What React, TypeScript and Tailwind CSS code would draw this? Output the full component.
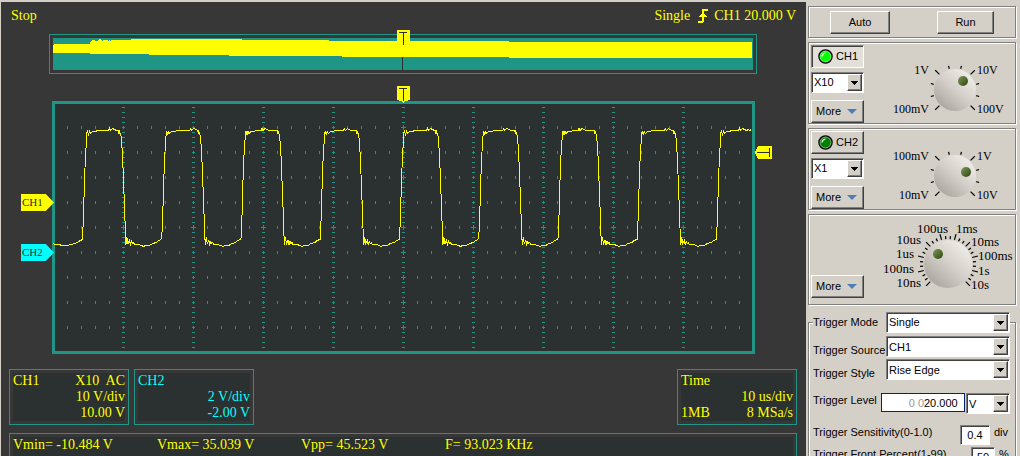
import type { ReactNode } from 'react'

const FIRST_EDGE = 82
const PERIOD = 79.25

// where the ripple on the flat top starts, one entry per pulse
const RIPPLES = [26, 28, 20, 23, 27, 24, 20, 27, 22]

function pulse(ripple: number): [number, number][] {
  return [
    [0, 238], [1, 215], [2, 180], [3, 155], [4, 140], [4.5, 132], [5, 131], [6, 134], [7, 131],
    [8, 133], [10, 131], [13, 131], [15, 130], [ripple, 130], [ripple + 1, 128], [ripple + 2, 130],
    [ripple + 4, 128], [ripple + 6, 129], [ripple + 8, 130], [36, 130], [36.5, 133], [37, 131],
    [38.5, 135], [39, 140], [40, 155], [41, 180], [42, 206], [43, 235], [43.5, 244], [44.5, 237],
    [45.5, 243], [47, 240], [48, 244], [49, 241], [50, 243], [51, 242], [52, 244], [56, 244],
    [59, 245], [61, 246], [63, 245], [67, 245], [70, 243], [74, 242], [76, 240], [79, 239],
  ]
}

function wavePoints() {
  const points: [number, number][] = [
    [53, 243], [54, 244], [59, 244], [61, 245], [67, 245], [70, 244], [75, 243], [78, 241], [82, 239],
  ]
  RIPPLES.forEach((ripple, i) => {
    pulse(ripple).forEach(([dx, y]) => points.push([FIRST_EDGE + i * PERIOD + dx, y]))
  })
  const visible = points.filter(([x]) => x <= 747)
  visible.push([748, 129], [749, 130], [751, 129])
  return visible.map(([x, y]) => `${x + 0.5},${y + 0.5}`).join(' ')
}

function gridPath() {
  let d = ''
  for (let y = 127; y <= 327; y += 25) {
    for (let x = 67; x <= 739; x += 14) {
      const major = (x - 53) % 70 === 0
      const big = major && (y === 227 || x === 403)
      d += big ? `M${x} ${y - 2}h1v5h-1z` : `M${x} ${y - 1}h1v3h-1z`
    }
  }
  for (let x = 123; x <= 683; x += 70) {
    for (let y = 107; y <= 347; y += 5) {
      const big = y === 227 || (x === 403 && (y - 127) % 25 === 0)
      d += big ? `M${x - 2} ${y}h5v1h-5z` : `M${x - 1} ${y}h3v1h-3z`
    }
  }
  return d
}

function Overview() {
  return (
    <div className="relative mr-[49px] ml-12 border border-[#1f9585] p-[3px]">
      <svg viewBox="53 38 700 32" className="block w-full bg-[#1f9585]" shapeRendering="crispEdges">
        <path
          fill="#ffff00"
          d="M53 45h1v-1h36v-2h1v-1h1v-1h3v1h3v-1h1v-1h2v1h1v1h1v-1h5v1h1v-1h1v1h1v-1h20v-1h111v1h87v1h180v1h243v16H509v-1H342v-1H229v-1H149v-1H90v-1H53z"
        />
        <path fill="#2b3030" d="M402 57h1v13h-1z" />
      </svg>
      <svg
        viewBox="0 0 13 16"
        className="absolute inset-x-0 -top-[5px] mx-auto h-4 w-[13px]"
        shapeRendering="crispEdges"
      >
        <path fill="#ffff00" d="M0 0h13v16H0z" />
        <path fill="#2b3030" d="M2 2h8v1H7v12H6V3H2z" />
      </svg>
    </div>
  )
}

function ChannelTag({ name, className }: { name: string; className: string }) {
  return (
    <div
      className={`absolute -left-[31px] h-[17px] w-[33px] pl-px text-[11px] leading-[17px] text-[#2b3030] [clip-path:polygon(0_0,75%_0,100%_50%,75%_100%,0_100%)] ${className}`}
    >
      {name}
    </div>
  )
}

function Plot() {
  return (
    <div className="relative mx-[51px] mt-[27px]">
      <svg viewBox="52 101 703 253" className="block w-full" shapeRendering="crispEdges">
        <rect x="53.5" y="102.5" width="700" height="250" fill="#2b3030" stroke="#1f9585" strokeWidth="3" />
        <path fill="#1f9585" d={gridPath()} />
        <polyline points={wavePoints()} fill="none" stroke="#ffff00" strokeWidth="1" />
      </svg>
      <svg
        viewBox="0 0 13 17"
        className="absolute inset-x-0 -top-[15px] mx-auto h-[17px] w-[13px]"
        shapeRendering="crispEdges"
      >
        <path fill="#ffff00" d="M0 0h13v14h-2v1H8v1H7v1H6v-1H5v-1H2v-1H0z" />
        <path fill="#2b3030" d="M2 2h8v1H7v12H6V3H2z" />
      </svg>
      <svg
        viewBox="0 0 17 13"
        className="absolute top-[45px] -right-[17px] h-[13px] w-[17px]"
        shapeRendering="crispEdges"
      >
        <path fill="#ffff00" d="M17 0v13H3v-1H2v-2H1V8H0V5h1V3h1V1h1V0z" />
        <path fill="#2b3030" d="M2 6h12V2h1v9h-1V7H2z" />
      </svg>
      <ChannelTag name="CH1" className="top-[93px] bg-[#ffff00]" />
      <ChannelTag name="CH2" className="top-[143px] bg-[#00ffff]" />
    </div>
  )
}

function InfoBox({ className = '', children }: { className?: string; children: ReactNode }) {
  return (
    <div className={`w-[120px] border border-[#1f9585] p-[3px] ${className}`}>
      <div className="bg-[#2b3030]">{children}</div>
    </div>
  )
}

function Scope() {
  return (
    <main className="min-w-0 flex-1 bg-[#373737] font-['Liberation_Serif',serif] text-[14px] leading-4 text-[#ffff00]">
      <header className="mb-1 flex h-7 items-center justify-between px-[10px]">
        <span>Stop</span>
        <div className="flex items-center">
          <span>Single</span>
          <svg viewBox="0 0 10 14" className="mr-[6px] ml-2 h-[14px] w-[10px]" shapeRendering="crispEdges">
            <path fill="#ffff00" d="M4 0h6v2H6v3h1v1h1v1h1v1H6v5H5v1H0v-2h4V8H1V7h1V6h1V5h1z" />
          </svg>
          <span>CH1 20.000 V</span>
        </div>
      </header>
      <Overview />
      <Plot />
      <div className="mt-[15px] mr-[9px] ml-2 flex gap-[5px]">
        <InfoBox>
          <div className="flex justify-between">
            <span>CH1</span>
            <span className="whitespace-pre">X10  AC</span>
          </div>
          <div className="text-right">10 V/div</div>
          <div className="text-right">10.00 V</div>
        </InfoBox>
        <InfoBox className="text-[#00ffff]">
          <div>CH2</div>
          <div className="text-right">2 V/div</div>
          <div className="text-right">-2.00 V</div>
        </InfoBox>
        <InfoBox className="ml-auto">
          <div>Time</div>
          <div className="text-right">10 us/div</div>
          <div className="flex justify-between">
            <span>1MB</span>
            <span>8 MSa/s</span>
          </div>
        </InfoBox>
      </div>
      <div className="mt-2 mr-[9px] ml-2 border border-[#1f9585] p-[3px]">
        <div className="flex bg-[#2b3030] pb-4">
          <span className="w-36">Vmin= -10.484 V</span>
          <span className="w-36">Vmax= 35.039 V</span>
          <span className="w-36">Vpp= 45.523 V</span>
          <span>F= 93.023 KHz</span>
        </div>
      </div>
    </main>
  )
}

const etched = 'border border-[#808080] shadow-[1px_1px_0_#fff,inset_1px_1px_0_#fff]'
const raised =
  'border border-t-white border-l-white border-r-[#404040] border-b-[#404040] bg-[#d4d0c8] shadow-[inset_-1px_-1px_0_#808080]'
const sunken =
  'border border-t-[#808080] border-l-[#808080] border-r-white border-b-white shadow-[inset_1px_1px_0_#404040]'

function Select({ id, label, value, className }: { id: string; label?: string; value: string; className: string }) {
  return (
    <span className={`relative block h-[21px] bg-white ${sunken} ${className}`}>
      <select id={id} aria-label={label} className="block h-full w-full appearance-none pl-[2px]">
        <option>{value}</option>
      </select>
      <span
        className={`pointer-events-none absolute top-px right-px bottom-px flex w-[15px] items-center justify-center ${raised}`}
      >
        <svg viewBox="0 0 7 4" className="h-1 w-[7px]" shapeRendering="crispEdges">
          <path d="M0 0h7v1H6v1H5v1H4v1H3V3H2V2H1V1H0z" />
        </svg>
      </span>
    </span>
  )
}

function MoreButton() {
  return (
    <button className={`flex h-[23px] w-[53px] items-center justify-between pr-[6px] pl-1 ${raised}`}>
      More
      <svg viewBox="0 0 10 5" className="h-[5px] w-[10px]">
        <path fill="#4f7cb8" d="M0 0h10L5 5z" />
      </svg>
    </button>
  )
}

type Tick = { angle: number; from: number; to: number }
type DialLabel = { text: string; x: number; y: number; end?: boolean }

type DialProps = {
  name: string
  viewBox: string
  className: string
  radius: number
  ticks: Tick[]
  labels: DialLabel[]
  dot: [number, number]
}

function Dial({ name, viewBox, className, radius, ticks, labels, dot }: DialProps) {
  return (
    <div className="relative">
      <svg viewBox={viewBox} className={`block font-['Liberation_Serif',serif] ${className}`}>
        <defs>
          <linearGradient id="knob" x1="0.85" y1="0.1" x2="0.15" y2="0.9">
            <stop offset="0" stopColor="#f0ece7" />
            <stop offset="0.5" stopColor="#d3cec8" />
            <stop offset="1" stopColor="#aaa6a0" />
          </linearGradient>
          <linearGradient id="dot" x1="0" y1="0" x2="1" y2="1">
            <stop offset="0" stopColor="#7c9954" />
            <stop offset="1" stopColor="#2f4512" />
          </linearGradient>
        </defs>
        {ticks.map(({ angle, from, to }) => {
          const c = Math.cos((angle * Math.PI) / 180)
          const s = -Math.sin((angle * Math.PI) / 180)
          return (
            <line key={angle} x1={c * from} y1={s * from} x2={c * to} y2={s * to} stroke="#000" strokeWidth="1.2" />
          )
        })}
        <circle r={radius} fill="url(#knob)" />
        <circle cx={dot[0]} cy={dot[1]} r="5" fill="url(#dot)" />
        {labels.map((l) => (
          <text key={l.text} x={l.x} y={l.y} textAnchor={l.end ? 'end' : 'start'}>
            {l.text}
          </text>
        ))}
      </svg>
      <input type="range" aria-label={name} className="absolute inset-0 h-full w-full cursor-pointer opacity-0" />
    </div>
  )
}

const voltTicks = Array.from({ length: 10 }, (_, i) => ({
  angle: 225 - i * 30,
  from: 22,
  to: i % 3 === 0 ? 28 : 25,
}))

const timeTicks = Array.from({ length: 28 }, (_, i) => ({
  angle: 225 - i * 10,
  from: 25,
  to: i % 3 === 0 ? 31 : 28,
}))

const timeLabels: DialLabel[] = [
  { text: '10ns', x: -27, y: 23, end: true },
  { text: '100ns', x: -34, y: 9, end: true },
  { text: '1us', x: -34, y: -6, end: true },
  { text: '10us', x: -27, y: -20, end: true },
  { text: '100us', x: -31, y: -31 },
  { text: '1ms', x: 8, y: -31 },
  { text: '10ms', x: 23, y: -18 },
  { text: '100ms', x: 30, y: -4 },
  { text: '1s', x: 30, y: 11 },
  { text: '10s', x: 23, y: 25 },
]

type ChannelProps = { name: string; probe: string; on?: boolean; marks: string[]; dot: [number, number] }

function Channel({ name, probe, on = false, marks, dot }: ChannelProps) {
  return (
    <section className={`flex justify-between ${etched}`}>
      <div className="pt-[2px] pl-[2px]">
        <button
          aria-pressed={on}
          className={`flex h-[23px] w-[53px] items-center gap-[3px] pl-[6px] ${on ? `bg-[#e2dfd9] ${sunken}` : raised}`}
        >
          <svg viewBox="0 0 15 15" className="h-[15px] w-[15px]">
            <circle cx="7.5" cy="7.5" r="6.5" fill={on ? '#00ff00' : '#008000'} stroke="#000" strokeWidth="1.5" />
            <circle cx="7.5" cy="7.5" r="5.5" fill="none" stroke="#fff" strokeWidth="0.5" />
            <path d="M4 7.5a4 4 0 0 1 3.5-3.5" fill="none" stroke="#fff" strokeWidth="1.2" />
          </svg>
          {name}
        </button>
        <Select id={`${name}-probe`} label={`${name} probe`} value={probe} className="mt-1 mb-[7px] w-[53px]" />
        <MoreButton />
      </div>
      <Dial
        name={`${name} volts per division`}
        viewBox="-64 -47 124 80"
        className="h-20 w-[124px] text-[12px]"
        radius={21}
        ticks={voltTicks}
        labels={[
          { text: marks[0], x: -26, y: -16, end: true },
          { text: marks[1], x: 22, y: -16 },
          { text: marks[2], x: -26, y: 23, end: true },
          { text: marks[3], x: 22, y: 23 },
        ]}
        dot={dot}
      />
    </section>
  )
}

function Field({ value, id, className }: { value: string; id: string; className: string }) {
  return <input id={id} defaultValue={value} className={`h-5 bg-white text-center ${sunken} ${className}`} />
}

function TriggerSettings() {
  return (
    <fieldset className={`mt-[3px] min-w-0 ${etched}`}>
      <legend className="mr-[5px] ml-1 flex w-[197px] items-center bg-[#d4d0c8]">
        <label htmlFor="mode" className="w-[73px]">Trigger Mode</label>
        <Select id="mode" value="Single" className="flex-1" />
      </legend>
      <div className="flex flex-col gap-[2px] pt-[3px] pr-[5px] pl-1 leading-[14px]">
        <div className="flex items-end">
          <label htmlFor="source" className="w-[73px]">Trigger Source</label>
          <Select id="source" value="CH1" className="flex-1" />
        </div>
        <div className="flex items-end">
          <label htmlFor="style" className="w-[73px]">Trigger Style</label>
          <Select id="style" value="Rise Edge" className="flex-1" />
        </div>
        <div className="mt-[11px] flex items-start">
          <label htmlFor="level" className="w-[68px]">Trigger Level</label>
          <div className="mr-px flex h-[19px] flex-1 items-center justify-end border border-[#0a246a] bg-white pr-1">
            <span className="whitespace-pre text-[#999]">0 0</span>
            <input id="level" defaultValue="20.000" className="w-9" />
          </div>
          <Select id="unit" label="Trigger level unit" value="V" className="w-11" />
        </div>
        <div className="mt-[9px] flex items-start">
          <label htmlFor="sensitivity" className="flex-1">Trigger Sensitivity(0-1.0)</label>
          <Field id="sensitivity" value="0.4" className="w-[30px]" />
          <span className="w-5 pl-1">div</span>
        </div>
        <div className="flex items-start">
          <label htmlFor="front" className="flex-1">Trigger Front Percent(1-99)</label>
          <Field id="front" value="50" className="w-6" />
          <span className="w-[15px] pl-1">%</span>
        </div>
      </div>
    </fieldset>
  )
}

function Controls() {
  return (
    <aside className="flex w-[214px] shrink-0 flex-col gap-1 pt-1 pr-1 pl-[2px] font-['Liberation_Sans',sans-serif] text-[11px] text-black">
      <section className={`flex h-8 shrink-0 justify-between pt-1 pr-[21px] pl-[21px] ${etched}`}>
        <button className={`h-[23px] w-[60px] ${raised}`}>Auto</button>
        <button className={`h-[23px] w-[57px] ${raised}`}>Run</button>
      </section>
      <Channel name="CH1" probe="X10" on marks={['1V', '10V', '100mV', '100V']} dot={[8, -9]} />
      <Channel name="CH2" probe="X1" marks={['100mV', '1V', '10mV', '10V']} dot={[11, -4]} />
      <section className={`flex items-end justify-between ${etched}`}>
        <div className="pb-[6px] pl-[2px]">
          <MoreButton />
        </div>
        <Dial
          name="Time per division"
          viewBox="-69 -49 136 89"
          className="h-[89px] w-[136px] text-[13px]"
          radius={24}
          ticks={timeTicks}
          labels={timeLabels}
          dot={[-10, -10]}
        />
      </section>
      <TriggerSettings />
    </aside>
  )
}

export default function App() {
  return (
    <div className="flex h-screen overflow-hidden bg-[#d4d0c8] pt-[2px] pl-px">
      <Scope />
      <Controls />
    </div>
  )
}
